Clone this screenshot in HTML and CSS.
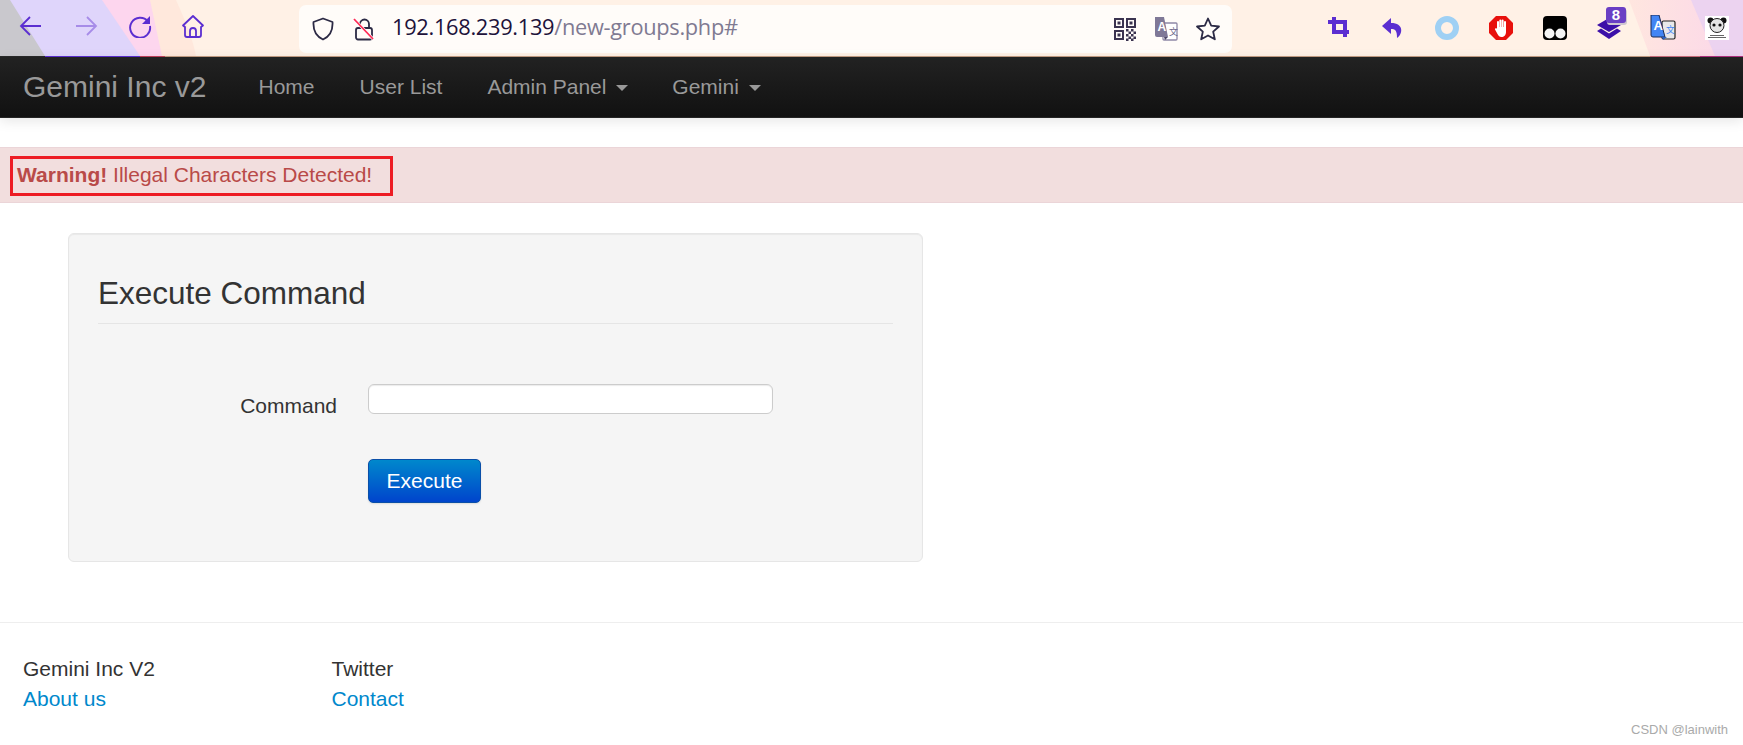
FILE: index.html
```html
<!DOCTYPE html>
<html lang="en">
<head>
<meta charset="utf-8">
<title>Gemini Inc v2</title>
<link rel="stylesheet" href="styles.css">
</head>
<body>
<header class="toolbar">
  <svg class="toolbar-bg" width="1743" height="57" viewBox="0 0 1743 57" aria-hidden="true">
    <defs><linearGradient id="tint" x1="0" x2="1" y1="0" y2="0"><stop offset="0" stop-color="#ffe6df"/><stop offset="1" stop-color="#fbd6ea"/></linearGradient></defs>
    <rect width="1743" height="56" fill="#fff1e6"/>
    <path d="M0 0H176C184 18 192 36 196 56H0Z" fill="#ffe8dc"/>
    <path d="M0 0H150L162 56H0Z" fill="#fdd6ee"/>
    <path d="M0 0H102L140 56H0Z" fill="#dfd5fb"/>
    <path d="M0 0H10L45 56H0Z" fill="#c9c8cd"/>
    <path d="M1629 0H1743V56H1650Z" fill="url(#tint)"/>
    <path d="M1691 0H1743V56H1715Z" fill="#ecd3f0"/>
    <rect y="56" width="1743" height="1" fill="#c39c82"/>
    <rect y="56" width="45" height="1" fill="#2a2a2a"/>
    <rect x="45" y="56" width="95" height="1" fill="#5b2ed1"/>
    <rect x="140" y="56" width="25" height="1" fill="#c0405a"/>
    <rect x="1650" y="56" width="50" height="1" fill="#c96a7a"/>
    <rect x="1700" y="56" width="43" height="1" fill="#b0307f"/>
  </svg>
  <div class="nav-buttons">
    <span class="tool"><svg width="24" height="24" viewBox="0 0 24 24" fill="none" stroke="#5b2ed1" stroke-width="1.8"><path d="M22 12H2M11 3l-9 9 9 9"/></svg></span>
    <span class="tool"><svg width="24" height="24" viewBox="0 0 24 24" fill="none" stroke="#a78ce8" stroke-width="1.8"><path d="M2 12h20M13 3l9 9-9 9"/></svg></span>
    <span class="tool"><svg width="24" height="24" viewBox="0 0 24 24" fill="none" stroke="#5b2ed1" stroke-width="1.9"><path d="M20 7.5A10 10 0 1 0 22 12"/><path d="M22 2v8h-8z" fill="#5b2ed1" stroke="none"/></svg></span>
    <span class="tool tool-home"><svg width="24" height="24" viewBox="0 0 24 24" fill="none" stroke="#5b2ed1" stroke-width="1.8" stroke-linejoin="round"><path d="M12 2 2 11.5l2 1.5v8a2 2 0 0 0 2 2h12a2 2 0 0 0 2-2v-8l2-1.500z"/><path d="M9 23v-6a3 3 0 0 1 6 0v6"/></svg></span>
  </div>
  <div class="urlbar">
    <svg class="shield" width="22" height="24" viewBox="0 0 22 24" fill="none" stroke="#2c2a45" stroke-width="1.8" stroke-linejoin="round"><path d="M11 1.500 20.500 5c.5 8-1.500 14-9.500 17.500C3 19 1 13 1.500 5z"/></svg>
    <svg class="lock" width="22" height="24" viewBox="0 0 22 24" fill="none"><path d="M7 11V7a4.500 4.500 0 0 1 9 0v4" stroke="#2c2a45" stroke-width="1.800"/><rect x="3" y="11" width="16" height="11.500" rx="2" stroke="#2c2a45" stroke-width="1.800"/><path d="M1 2l19 20" stroke="#fff" stroke-width="3"/><path d="M1 2l19 20" stroke="#ff2a55" stroke-width="1.800"/></svg>
    <div class="url"><span class="host">192.168.239.139</span><span class="path">/new-groups.php#</span></div>
    <svg class="qr" width="22" height="24" viewBox="0 0 22 24" fill="#3b3350"><path d="M0 1h10v10H0zM2 3v6h6V3zM3.500 4.500h3v3h-3zM12 1h10v10H12zM14 3v6h6V3zM15.500 4.500h3v3h-3zM0 13h10v10H0zM2 15v6h6v-6zM3.500 16.500h3v3h-3z" fill-rule="evenodd"/><path d="M12 12h2.500v2.500H12zM17 12h2.500v2.500H17zM14.500 14.500H17V17h-2.500zM19.500 14.500H22V17h-2.500zM12 17h2.500v2.500H12zM17 17h2.500v2.500H17zM14.500 19.500H17V22h-2.500zM19.500 19.500H22V22h-2.500zM12 21.500h2.500V24H12zM17 21.500h2.500V24H17z"/></svg>
    <svg class="tr" width="24" height="26" viewBox="0 0 24 26"><rect x="9" y="7" width="14" height="17" rx="1" fill="#fff" stroke="#8f88a6" stroke-width="1.300"/><path d="M1 1h9l4 20H3a2 2 0 0 1-2-2z" fill="#7f7897"/><path d="M10 21l4 0-3 3z" fill="#4d4668"/><text x="3.500" y="15" class="tr-a">A</text><text x="15" y="19" class="tr-z">文</text></svg>
    <svg class="star" width="24" height="24" viewBox="0 0 24 24" fill="none" stroke="#2c2a45" stroke-width="1.800" stroke-linejoin="round"><path d="M12 1.500 15.200 8.600 23 9.500 17.200 14.700 18.800 22.300 12 18.500 5.200 22.300 6.800 14.700 1 9.500 8.800 8.600z"/></svg>
  </div>
  <div class="extensions">
    <span class="ext"><svg width="22" height="24" viewBox="0 0 22 24" fill="none" stroke="#5b2ed1" stroke-width="4"><path d="M0 6h17v15M6 1v15h15"/></svg></span>
    <span class="ext"><svg width="22" height="22" viewBox="0 0 22 22" fill="#5b2ed1"><path d="M9 1 0 9l9 8v-5c4 0 6 1 6 9 6-4 7-15-6-15z"/></svg></span>
    <span class="ext"><svg width="24" height="24" viewBox="0 0 24 24" fill="none" stroke="#9fd0f4" stroke-width="6"><circle cx="12" cy="12" r="9"/></svg></span>
    <span class="ext"><svg width="24" height="24" viewBox="0 0 24 24"><path d="M7 0h10l7 7v10l-7 7H7l-7-7V7z" fill="#e8100c"/><path d="M9 6v7M11.300 4.500V12M13.600 4.500V12M16 6v8" stroke="#fff" stroke-width="2" stroke-linecap="round"/><path d="M8 11h9v5c0 3-2 5-4.500 5-2 0-3-1-4-3l-2.500-4.500c-.5-1 1-1.800 2-.800z" fill="#fff"/></svg></span>
    <span class="ext"><svg width="24" height="24" viewBox="0 0 24 24"><rect width="24" height="24" rx="4" fill="#000"/><circle cx="6.500" cy="17.500" r="5" fill="#f4f4f4"/><circle cx="17.500" cy="17.500" r="5" fill="#f4f4f4"/></svg></span>
    <span class="ext ext-stack"><svg width="26" height="30" viewBox="0 0 26 30" fill="#3c0fa8"><path d="M13 5 25 12 13 19 1 12z"/><path d="M1 18l4-2.500 8 5 8-5 4 2.500-12 8z"/></svg><span class="badge">8</span></span>
    <span class="ext"><svg width="26" height="26" viewBox="0 0 26 26"><rect x="12" y="6" width="13" height="18" rx="1.500" fill="#e8e8ea" stroke="#222" stroke-width="1.200"/><path d="M1 0h8l6 22H3a2 2 0 0 1-2-2z" fill="#4285f4" stroke="#1d2d55" stroke-width="1"/><path d="M12 22h5l-4 3z" fill="#2a5fc0"/><text x="3.500" y="15" class="ext-a">A</text><text x="16" y="18" class="ext-z">文</text></svg></span>
    <span class="ext"><svg width="24" height="24" viewBox="0 0 24 24"><rect width="24" height="24" fill="#fff"/><circle cx="5.500" cy="4.500" r="3" fill="#111"/><circle cx="18.500" cy="4.500" r="3" fill="#111"/><circle cx="12" cy="9.500" r="7" fill="#e4e4e4" stroke="#222"/><circle cx="9" cy="9" r="1.600" fill="#111"/><circle cx="15" cy="9" r="1.600" fill="#111"/><path d="M5 19.500h14M3 21.500h18" stroke="#666" stroke-width="1"/></svg></span>
  </div>
</header>

<nav class="navbar">
  <a class="brand" href="#">Gemini Inc v2</a>
  <ul class="menu">
    <li><a href="#">Home</a></li>
    <li><a href="#">User List</a></li>
    <li><a href="#">Admin Panel <b class="caret"></b></a></li>
    <li><a href="#">Gemini <b class="caret"></b></a></li>
  </ul>
</nav>

<div class="alert"><span class="alert-mark"><strong>Warning!</strong> Illegal Characters Detected!</span></div>

<main class="well">
  <h2 class="well-title">Execute Command</h2>
  <form class="form" onsubmit="return false">
    <label class="form-label" for="cmd">Command</label>
    <input class="form-input" id="cmd" type="text">
    <button class="btn" type="submit">Execute</button>
  </form>
</main>

<footer class="footer">
  <div class="footer-col"><div>Gemini Inc V2</div><a href="#">About us</a></div>
  <div class="footer-col"><div>Twitter</div><a href="#">Contact</a></div>
</footer>

<div class="watermark">CSDN @lainwith</div>
</body>
</html>
```

FILE: styles.css
```css
* { box-sizing: border-box; }
html, body { margin: 0; padding: 0; }
body {
  position: relative;
  height: 745px;
  overflow: hidden;
  background: #fff;
  color: #333;
  font-family: "Liberation Sans", Arial, sans-serif;
  font-size: 21px;
  line-height: 30px;
}
a { text-decoration: none; }

/* browser chrome */
.toolbar {
  position: relative;
  display: flex;
  align-items: center;
  height: 57px;
  padding-bottom: 5px;
}
.toolbar-bg { position: absolute; left: 0; top: 0; }
.nav-buttons, .urlbar, .extensions { position: relative; display: flex; align-items: center; flex: none; }
.nav-buttons { width: 299px; padding-left: 4px; }
.tool { width: 54.500px; display: flex; justify-content: center; }
.tool-home { margin-left: -2px; }
.urlbar {
  width: 933px;
  height: 48px;
  margin-top: 5px;
  padding: 0 12px 0 13px;
  background: #fffcf9;
  border-radius: 7px;
}
.shield { margin-right: 19px; }
.url { flex: 1; margin-left: 17px; padding-bottom: 4px; font-family: "Open Sans", "Noto Sans", sans-serif; font-size: 21.800px; letter-spacing: -0.3px; white-space: nowrap; }
.host { color: #20123a; }
.path { color: #7f7a92; }
.qr { margin-right: 18px; }
.tr { margin-right: 18px; }
.tr-a { font: bold 12px "Liberation Sans", sans-serif; fill: #fff; }
.tr-z { font: 9px "Noto Sans CJK SC", sans-serif; fill: #6d6688; }
.extensions { margin-left: 80px; margin-top: 3px; }
.ext { width: 54px; display: flex; justify-content: center; position: relative; }
.ext-a { font: bold 13px "Liberation Sans", sans-serif; fill: #fff; }
.ext-z { font: 9px "Noto Sans CJK SC", sans-serif; fill: #4285f4; }
.badge {
  position: absolute;
  left: 24px;
  top: -6px;
  width: 20px;
  height: 16px;
  border-radius: 3px;
  background: #6a3fc4;
  box-shadow: 1px 2px 0 #cfc6d0;
  color: #fff;
  font: bold 15px/16px "Liberation Sans", sans-serif;
  text-align: center;
}

/* navbar */
.navbar {
  position: relative;
  display: flex;
  align-items: center;
  height: 61px;
  padding: 0 0 1px 23px;
  background: linear-gradient(#222, #111);
  border-bottom: 1px solid #252525;
  box-shadow: 0 3px 12px rgba(0, 0, 0, .1);
}
.brand { width: 213px; font-size: 30px; color: #999; }
.menu { display: flex; list-style: none; margin: 0; padding: 0; }
.menu a { display: block; padding: 0 22.500px; color: #999; }
.caret {
  display: inline-block;
  margin: 0 -1px 0 4px;
  vertical-align: 3px;
  border-top: 6px solid #999;
  border-left: 6px solid transparent;
  border-right: 6px solid transparent;
}

/* alert */
.alert {
  margin-top: 29px;
  height: 56px;
  padding: 8px 0 0 10px;
  background: #f2dede;
  border-top: 1px solid #ebd5d8;
  border-bottom: 1px solid #ebd5d8;
  color: #b94a48;
}
.alert-mark {
  display: block;
  width: 383px;
  height: 40px;
  padding: 1px 0 0 4px;
  border: 3px solid #ed1c24;
  white-space: nowrap;
}

/* well */
.well {
  width: 855px;
  height: 329px;
  margin: 30px 0 0 68px;
  padding: 39px 29px 0;
  background: #f5f5f5;
  border: 1px solid #e6e6e6;
  border-radius: 6px;
  box-shadow: inset 0 1px 1px rgba(0, 0, 0, .05);
}
.well-title {
  margin: 0;
  height: 51px;
  border-bottom: 1px solid #e5e5e5;
  font-size: 31.500px;
  font-weight: 400;
  line-height: 40px;
}
.form {
  display: grid;
  grid-template-columns: 239px 405px;
  column-gap: 31px;
  row-gap: 38px;
  justify-items: start;
  margin-top: 60px;
}
.form-label { justify-self: end; padding-top: 7px; color: #333; }
.form-input {
  width: 405px;
  height: 30px;
  padding: 0 8px;
  background: #fff;
  border: 1px solid #ccc;
  border-radius: 6px;
  box-shadow: inset 0 1px 1px rgba(0, 0, 0, .08);
}
.btn {
  grid-column: 2;
  width: 113px;
  height: 44px;
  padding: 0;
  background: linear-gradient(#0088cc, #0044cc);
  border: 1px solid #0a4fa8;
  border-radius: 5px;
  box-shadow: 0 1px 2px rgba(0, 0, 0, .1);
  color: #fff;
  font: 21px "Liberation Sans", Arial, sans-serif;
}

/* footer */
.footer {
  display: flex;
  margin-top: 60px;
  padding: 31px 0 0 23px;
  border-top: 1px solid #eee;
}
.footer-col { width: 308.500px; }
.footer-col a { color: #0088cc; }

.watermark {
  position: absolute;
  right: 15px;
  bottom: 6px;
  color: #aaa;
  font-size: 13px;
  line-height: 18px;
}
```
